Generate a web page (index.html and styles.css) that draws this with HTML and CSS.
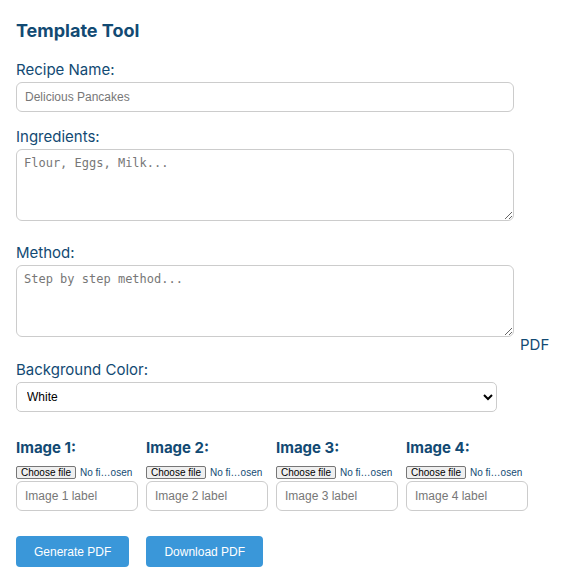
FILE: index.html
```html
<!DOCTYPE html>
<html lang="en">
<head>
    <meta charset="UTF-8">
    <meta name="viewport" content="width=device-width, initial-scale=1.0">
    <title>Template Tool</title>
    <link rel="stylesheet" href="styles.css">
</head>
<body>
    <div class="container">
        <h2 class="title">Template Tool</h2>

        <div class="field">
            <label for="recipeName">Recipe Name:</label>
            <input type="text" id="recipeName" class="text-input" placeholder="Delicious Pancakes">
        </div>

        <div class="field field-tall">
            <label for="ingredients">Ingredients:</label>
            <textarea id="ingredients" class="text-area" placeholder="Flour, Eggs, Milk..."></textarea>
        </div>

        <div class="field field-method">
            <label for="method">Method:</label>
            <div class="method-row">
                <textarea id="method" class="text-area" placeholder="Step by step method..."></textarea>
                <span class="pdf-note">PDF</span>
            </div>
        </div>

        <div class="field field-select">
            <label for="bgColor">Background Color:</label>
            <select id="bgColor" class="select-input">
                <option>White</option>
                <option>Cream</option>
                <option>Light Gray</option>
            </select>
        </div>

        <!-- image slots -->
        <div class="image-grid">
            <div class="image-slot">
                <h3>Image 1:</h3>
                <label class="file-pick">
                    <input type="file" class="file-input">
                    <span class="file-btn">Choose file</span>
                    <span class="file-name">No fi…osen</span>
                </label>
                <input type="text" class="label-input" placeholder="Image 1 label">
            </div>
            <div class="image-slot">
                <h3>Image 2:</h3>
                <label class="file-pick">
                    <input type="file" class="file-input">
                    <span class="file-btn">Choose file</span>
                    <span class="file-name">No fi…osen</span>
                </label>
                <input type="text" class="label-input" placeholder="Image 2 label">
            </div>
            <div class="image-slot">
                <h3>Image 3:</h3>
                <label class="file-pick">
                    <input type="file" class="file-input">
                    <span class="file-btn">Choose file</span>
                    <span class="file-name">No fi…osen</span>
                </label>
                <input type="text" class="label-input" placeholder="Image 3 label">
            </div>
            <div class="image-slot">
                <h3>Image 4:</h3>
                <label class="file-pick">
                    <input type="file" class="file-input">
                    <span class="file-btn">Choose file</span>
                    <span class="file-name">No fi…osen</span>
                </label>
                <input type="text" class="label-input" placeholder="Image 4 label">
            </div>
        </div>

        <div class="actions">
            <button type="button" class="btn">Generate PDF</button>
            <button type="button" class="btn">Download PDF</button>
        </div>
    </div>
</body>
</html>
```

FILE: styles.css
```css
body {
    font-family: Inter, "Noto Sans", sans-serif;
    color: #124a73;
    background-color: #fff;
    margin: 0;
    padding: 0;
}

.container {
    padding: 20px 16px;
}

.title {
    font-size: 18px;
    font-weight: 700;
    line-height: 22px;
    margin: 0 0 19px;
}

.field {
    margin-bottom: 16px;
}

.field-tall {
    margin-bottom: 23px;
}

.field-method {
    margin-bottom: 24px;
}

.field > label {
    display: block;
    font-size: 15px;
    line-height: 18px;
    margin-bottom: 3px;
}

.text-input,
.label-input {
    box-sizing: border-box;
    height: 30px;
    border: 1px solid #ccc;
    border-radius: 6px;
    padding: 0 8px;
    font-family: "Liberation Sans", Arial, sans-serif;
    font-size: 12px;
    color: #333;
}

.text-input {
    width: 498px;
}

.text-input::placeholder,
.label-input::placeholder {
    color: #777;
}

.text-area {
    box-sizing: border-box;
    flex-shrink: 0;
    width: 498px;
    height: 72px;
    border: 1px solid #ccc;
    border-radius: 6px;
    padding: 6px 7px;
    font-family: "DejaVu Sans Mono", monospace;
    font-size: 12px;
    display: block;
}

.text-area::placeholder {
    color: #777;
}

.method-row {
    display: flex;
    align-items: flex-end;
}

.pdf-note {
    font-size: 15px;
    line-height: 18px;
    margin-left: 6px;
    margin-bottom: -17px;
}

.field-select {
    margin-bottom: 27px;
}

.select-input {
    box-sizing: border-box;
    width: 481px;
    height: 30px;
    border: 1px solid #ccc;
    border-radius: 5px;
    background-color: #fff;
    padding: 0 6px;
    font-family: "Liberation Sans", Arial, sans-serif;
    font-size: 12px;
    color: #000;
}

.image-grid {
    display: grid;
    grid-template-columns: repeat(4, 130px);
}

.image-slot h3 {
    font-size: 15px;
    font-weight: 700;
    line-height: 18px;
    margin: 0 0 9px;
}

.file-pick {
    display: flex;
    align-items: center;
    gap: 4px;
    height: 13px;
    margin-bottom: 2px;
    font-family: "Liberation Sans", Arial, sans-serif;
    font-size: 10px;
    line-height: 11px;
    white-space: nowrap;
}

.file-input {
    display: none;
}

.file-btn {
    box-sizing: border-box;
    height: 13px;
    padding: 0 4px;
    background-color: #efefef;
    border: 1px solid #767676;
    border-radius: 2px;
    color: #000;
}

.file-name {
    color: #124a73;
}

.label-input {
    display: block;
    width: 122px;
}

.actions {
    display: flex;
    gap: 17px;
    margin-top: 25px;
}

.btn {
    height: 31px;
    padding: 0 18px;
    background-color: #3a97d9;
    color: #fff;
    border: none;
    border-radius: 4px;
    font-family: "Liberation Sans", Arial, sans-serif;
    font-size: 12px;
}
```
